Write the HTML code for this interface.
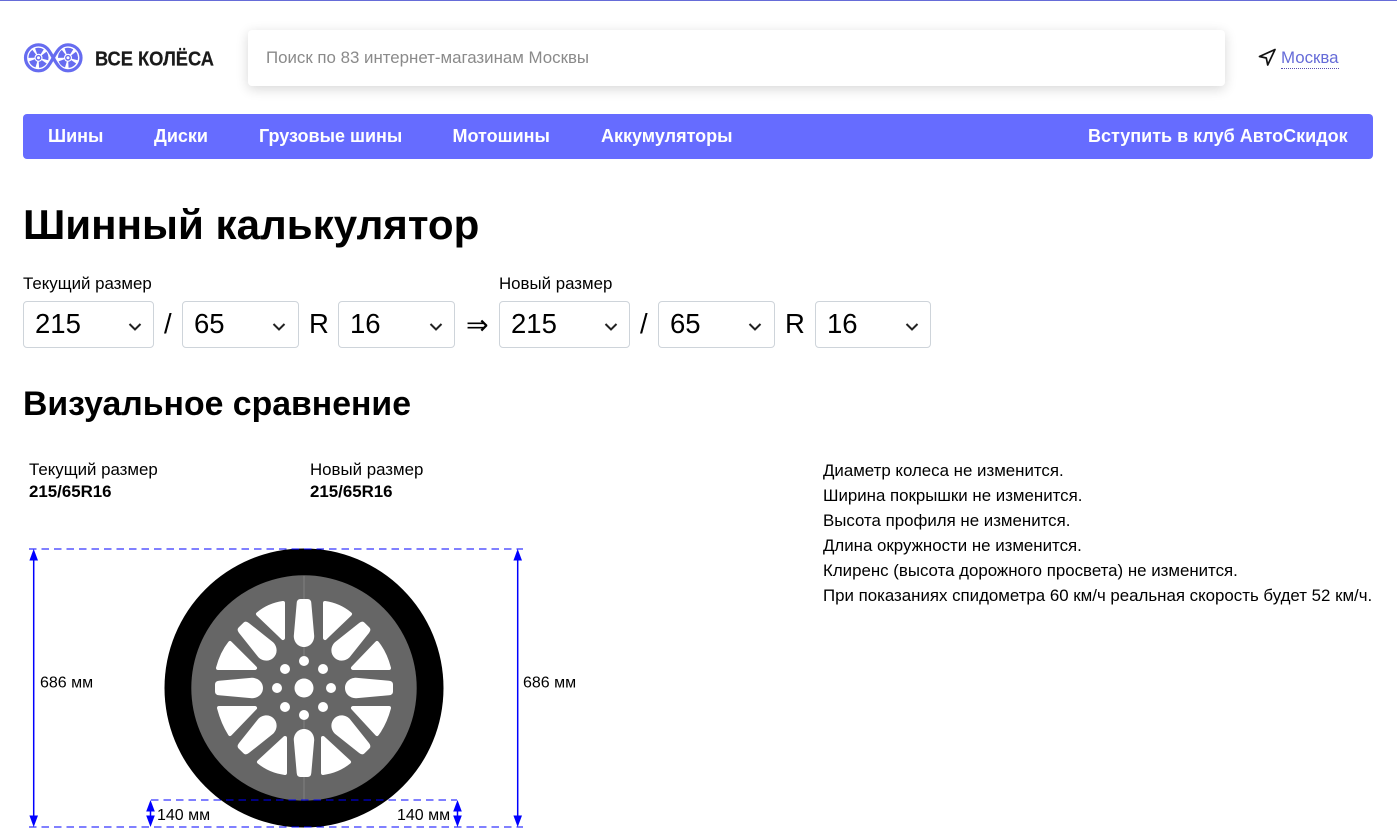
<!DOCTYPE html>
<html lang="ru"><head><meta charset="utf-8"><title>Шинный калькулятор</title>
<style>
html,body{margin:0;padding:0;background:#fff;width:1397px;height:840px;overflow:hidden}
body{font-family:"Liberation Sans",Arial,sans-serif;color:#000;position:relative}
.a{position:absolute;white-space:nowrap}
.sel{position:absolute;top:301px;height:45px;border:1px solid #ced4da;border-radius:4px;background:#fff;font-size:27.500px;line-height:43px;color:#000}
.sel span{position:absolute;left:11px;top:0}
.sel svg{position:absolute;top:20px}
.sep{position:absolute;top:307px;font-size:27.500px;line-height:34px}
.nav{position:absolute;top:126px;font-size:18px;line-height:20px;font-weight:700;color:#fff;white-space:nowrap}
.l{font-size:16.870px;line-height:20px}
</style></head><body>
<div class="a" style="left:0;top:0;width:1397px;height:1px;background:#666cd8"></div>

<svg class="a" style="left:20px;top:40px" width="70" height="36" viewBox="0 0 70 36">
<path d="M18.500 4.800C26 4.800 29 10 33.250 17.800C37.500 25.600 41 30.800 48 30.800A13 13 0 0 0 48 4.800C41 4.800 37.500 10 33.250 17.800C29 25.600 26 30.800 18.500 30.800A13 13 0 0 1 18.500 4.800Z" fill="none" stroke="#666cf0" stroke-width="3.200" stroke-linejoin="round"/>
<circle cx="18.500" cy="17.800" r="7" fill="none" stroke="#666cf0" stroke-width="6" stroke-dasharray="6.300 2.500" transform="rotate(-110 18.500 17.800)"/>
<circle cx="48" cy="17.800" r="7" fill="none" stroke="#666cf0" stroke-width="6" stroke-dasharray="6.300 2.500" transform="rotate(-110 48 17.800)"/>
<circle cx="18.500" cy="17.800" r="2.200" fill="#fff" stroke="#666cf0" stroke-width="1.400"/>
<circle cx="48" cy="17.800" r="2.200" fill="#fff" stroke="#666cf0" stroke-width="1.400"/>
</svg>
<svg class="a" style="left:90px;top:44px" width="130" height="28"><text x="5" y="21.500" font-family="Liberation Sans" font-weight="700" font-size="20.500" fill="#1a1a1a" stroke="#1a1a1a" stroke-width=".2" textLength="119" lengthAdjust="spacingAndGlyphs">ВСЕ КОЛЁСА</text></svg>

<div class="a" style="left:248px;top:30px;width:977px;height:56px;background:#fff;border-radius:4px;box-shadow:0 3px 12px rgba(0,0,0,.16)"></div>
<div class="a" style="left:266px;top:48px;font-size:16.870px;line-height:20px;color:#8a8a8a">Поиск по 83 интернет-магазинам Москвы</div>

<svg class="a" style="left:1258px;top:48px" width="19" height="19" viewBox="0 0 19 19"><path d="M1.500 8.500L17 1.500L9.700 17L8.300 10Z" fill="none" stroke="#111" stroke-width="1.700" stroke-linejoin="round"/></svg>
<div class="a" style="left:1281px;top:48px;font-size:16.870px;line-height:20px;color:#666cd8;border-bottom:1px dotted #5a50b0">Москва</div>

<div class="a" style="left:23px;top:114px;width:1350px;height:45px;background:#666cff;border-radius:4px"></div>
<div class="nav" style="left:48px">Шины</div>
<div class="nav" style="left:154px">Диски</div>
<div class="nav" style="left:259px">Грузовые шины</div>
<div class="nav" style="left:452.500px">Мотошины</div>
<div class="nav" style="left:601px">Аккумуляторы</div>
<div class="nav" style="left:1088px">Вступить в клуб АвтоСкидок</div>

<div class="a" style="left:23px;top:201px;font-size:42.100px;line-height:48px;font-weight:700">Шинный калькулятор</div>

<div class="a l" style="left:23px;top:274px">Текущий размер</div>
<div class="sel" style="left:23px;width:129px"><span>215</span><svg style="left:103px" width="16" height="10"><path d="M2.500 2L8 7.500L13.500 2" fill="none" stroke="#222" stroke-width="2"/></svg></div>
<div class="sep" style="left:164px">/</div>
<div class="sel" style="left:182px;width:115px"><span>65</span><svg style="left:88px" width="16" height="10"><path d="M2.500 2L8 7.500L13.500 2" fill="none" stroke="#222" stroke-width="2"/></svg></div>
<div class="sep" style="left:309px">R</div>
<div class="sel" style="left:338px;width:115px"><span>16</span><svg style="left:89px" width="16" height="10"><path d="M2.500 2L8 7.500L13.500 2" fill="none" stroke="#222" stroke-width="2"/></svg></div>
<div class="sep" style="left:466px;top:309px;font-family:'DejaVu Sans',sans-serif;font-size:27px;line-height:34px">⇒</div>

<div class="a l" style="left:499px;top:274px">Новый размер</div>
<div class="sel" style="left:499px;width:129px"><span>215</span><svg style="left:103px" width="16" height="10"><path d="M2.500 2L8 7.500L13.500 2" fill="none" stroke="#222" stroke-width="2"/></svg></div>
<div class="sep" style="left:640px">/</div>
<div class="sel" style="left:658px;width:115px"><span>65</span><svg style="left:88px" width="16" height="10"><path d="M2.500 2L8 7.500L13.500 2" fill="none" stroke="#222" stroke-width="2"/></svg></div>
<div class="sep" style="left:785px">R</div>
<div class="sel" style="left:815px;width:114px"><span>16</span><svg style="left:88px" width="16" height="10"><path d="M2.500 2L8 7.500L13.500 2" fill="none" stroke="#222" stroke-width="2"/></svg></div>

<div class="a" style="left:23px;top:384px;font-size:33.800px;line-height:40px;font-weight:700">Визуальное сравнение</div>

<div class="a l" style="left:29px;top:459px;line-height:22px">Текущий размер<br><b>215/65R16</b></div>
<div class="a l" style="left:310px;top:459px;line-height:22px">Новый размер<br><b>215/65R16</b></div>

<div class="a" style="left:823px;top:458px;font-size:16.870px;line-height:25px">Диаметр колеса не изменится.<br>Ширина покрышки не изменится.<br>Высота профиля не изменится.<br>Длина окружности не изменится.<br>Клиренс (высота дорожного просвета) не изменится.<br>При показаниях спидометра 60 км/ч реальная скорость будет 52 км/ч.</div>

<svg class="a" style="left:0;top:530px" width="620" height="310" viewBox="0 530 620 310" font-family="Liberation Sans" font-size="16">
<circle cx="304" cy="688" r="139.500" fill="#000"/>
<circle cx="304" cy="688" r="112.700" fill="#666"/>
<g fill="#fff">
<path d="M296.700 603Q297 599 300.500 599L307.500 599Q311 599 311.300 603L314.200 636C314.200 642 310 647 304 647C298 647 293.800 642 293.800 636Z"/>
<path d="M296.700 603Q297 599 300.500 599L307.500 599Q311 599 311.300 603L314.200 636C314.200 642 310 647 304 647C298 647 293.800 642 293.800 636Z" transform="rotate(90 304 688)"/>
<path d="M296.700 603Q297 599 300.500 599L307.500 599Q311 599 311.300 603L314.200 636C314.200 642 310 647 304 647C298 647 293.800 642 293.800 636Z" transform="rotate(180 304 688)"/>
<path d="M296.700 603Q297 599 300.500 599L307.500 599Q311 599 311.300 603L314.200 636C314.200 642 310 647 304 647C298 647 293.800 642 293.800 636Z" transform="rotate(270 304 688)"/>
<path d="M297 603Q297.500 599 300.500 599L307.500 599Q310.500 599 311 603L314.500 634C314.500 640 310 645 304 645C298 645 293.500 640 293.500 634Z" transform="rotate(45 304 688)"/>
<path d="M297 603Q297.500 599 300.500 599L307.500 599Q310.500 599 311 603L314.500 634C314.500 640 310 645 304 645C298 645 293.500 640 293.500 634Z" transform="rotate(135 304 688)"/>
<path d="M297 603Q297.500 599 300.500 599L307.500 599Q310.500 599 311 603L314.500 634C314.500 640 310 645 304 645C298 645 293.500 640 293.500 634Z" transform="rotate(225 304 688)"/>
<path d="M297 603Q297.500 599 300.500 599L307.500 599Q310.500 599 311 603L314.500 634C314.500 640 310 645 304 645C298 645 293.500 640 293.500 634Z" transform="rotate(315 304 688)"/>
</g>
<g fill="#fff" stroke="#fff" stroke-width="4" stroke-linejoin="round">
<path d="M325 603Q339 605 350 614L325 638Z"/>
<path d="M283 603Q269 605 258 614L283 638Z"/>
<path d="M389 668Q385 653 377 643L353 668Z"/>
<path d="M218 668Q222 653 230 643L255 668Z"/>
<path d="M389 708Q385 723 377 734L353 708Z"/>
<path d="M219 708Q223 723 230 734L255 708Z"/>
<path d="M323 738L349 762Q338 771 323 773Z"/>
<path d="M285 738L259 762Q270 771 285 773Z"/>
</g>
<g fill="#fff">
<circle cx="304" cy="688" r="9.500"/>
<circle cx="304" cy="661" r="5"/><circle cx="304" cy="715" r="5"/>
<circle cx="277" cy="688" r="5"/><circle cx="331" cy="688" r="5"/>
<circle cx="285" cy="669" r="5"/><circle cx="323" cy="669" r="5"/>
<circle cx="285" cy="707" r="5"/><circle cx="323" cy="707" r="5"/>
</g>
<line x1="304" y1="576" x2="304" y2="599" stroke="#808080" stroke-width="1"/>
<line x1="304" y1="777" x2="304" y2="800" stroke="#808080" stroke-width="1"/>
<line x1="304" y1="647" x2="304" y2="656" stroke="#808080" stroke-width="1"/>
<line x1="304" y1="720" x2="304" y2="729" stroke="#808080" stroke-width="1"/>
<g stroke="#00f" stroke-width="1" stroke-dasharray="7.500 5" fill="none">
<line x1="29" y1="549" x2="523" y2="549"/>
<line x1="29" y1="827" x2="523" y2="827"/>
<line x1="151" y1="800" x2="457" y2="800"/>
</g>
<g stroke="#00f" stroke-width="1.500"><line x1="33.700" y1="556" x2="33.700" y2="820"/><line x1="517.700" y1="556" x2="517.700" y2="820"/><line x1="150.500" y1="806" x2="150.500" y2="821"/><line x1="457.500" y1="806" x2="457.500" y2="821"/></g>
<g fill="#00f">
<path d="M33.700 549L38 560.500L29.400 560.500Z"/><path d="M33.700 827L38 815.500L29.400 815.500Z"/>
<path d="M517.700 549L522 560.500L513.400 560.500Z"/><path d="M517.700 827L522 815.500L513.400 815.500Z"/>
<path d="M150.500 800L154.800 811.500L146.200 811.500Z"/><path d="M150.500 827L154.800 815.500L146.200 815.500Z"/>
<path d="M457.500 800L461.800 811.500L453.200 811.500Z"/><path d="M457.500 827L461.800 815.500L453.200 815.500Z"/>
</g>
<text x="40" y="687.500" fill="#000">686 мм</text>
<text x="523" y="687.500" fill="#000">686 мм</text>
<text x="157" y="820" fill="#000">140 мм</text>
<text x="397" y="820" fill="#000">140 мм</text>
</svg>
</body></html>
